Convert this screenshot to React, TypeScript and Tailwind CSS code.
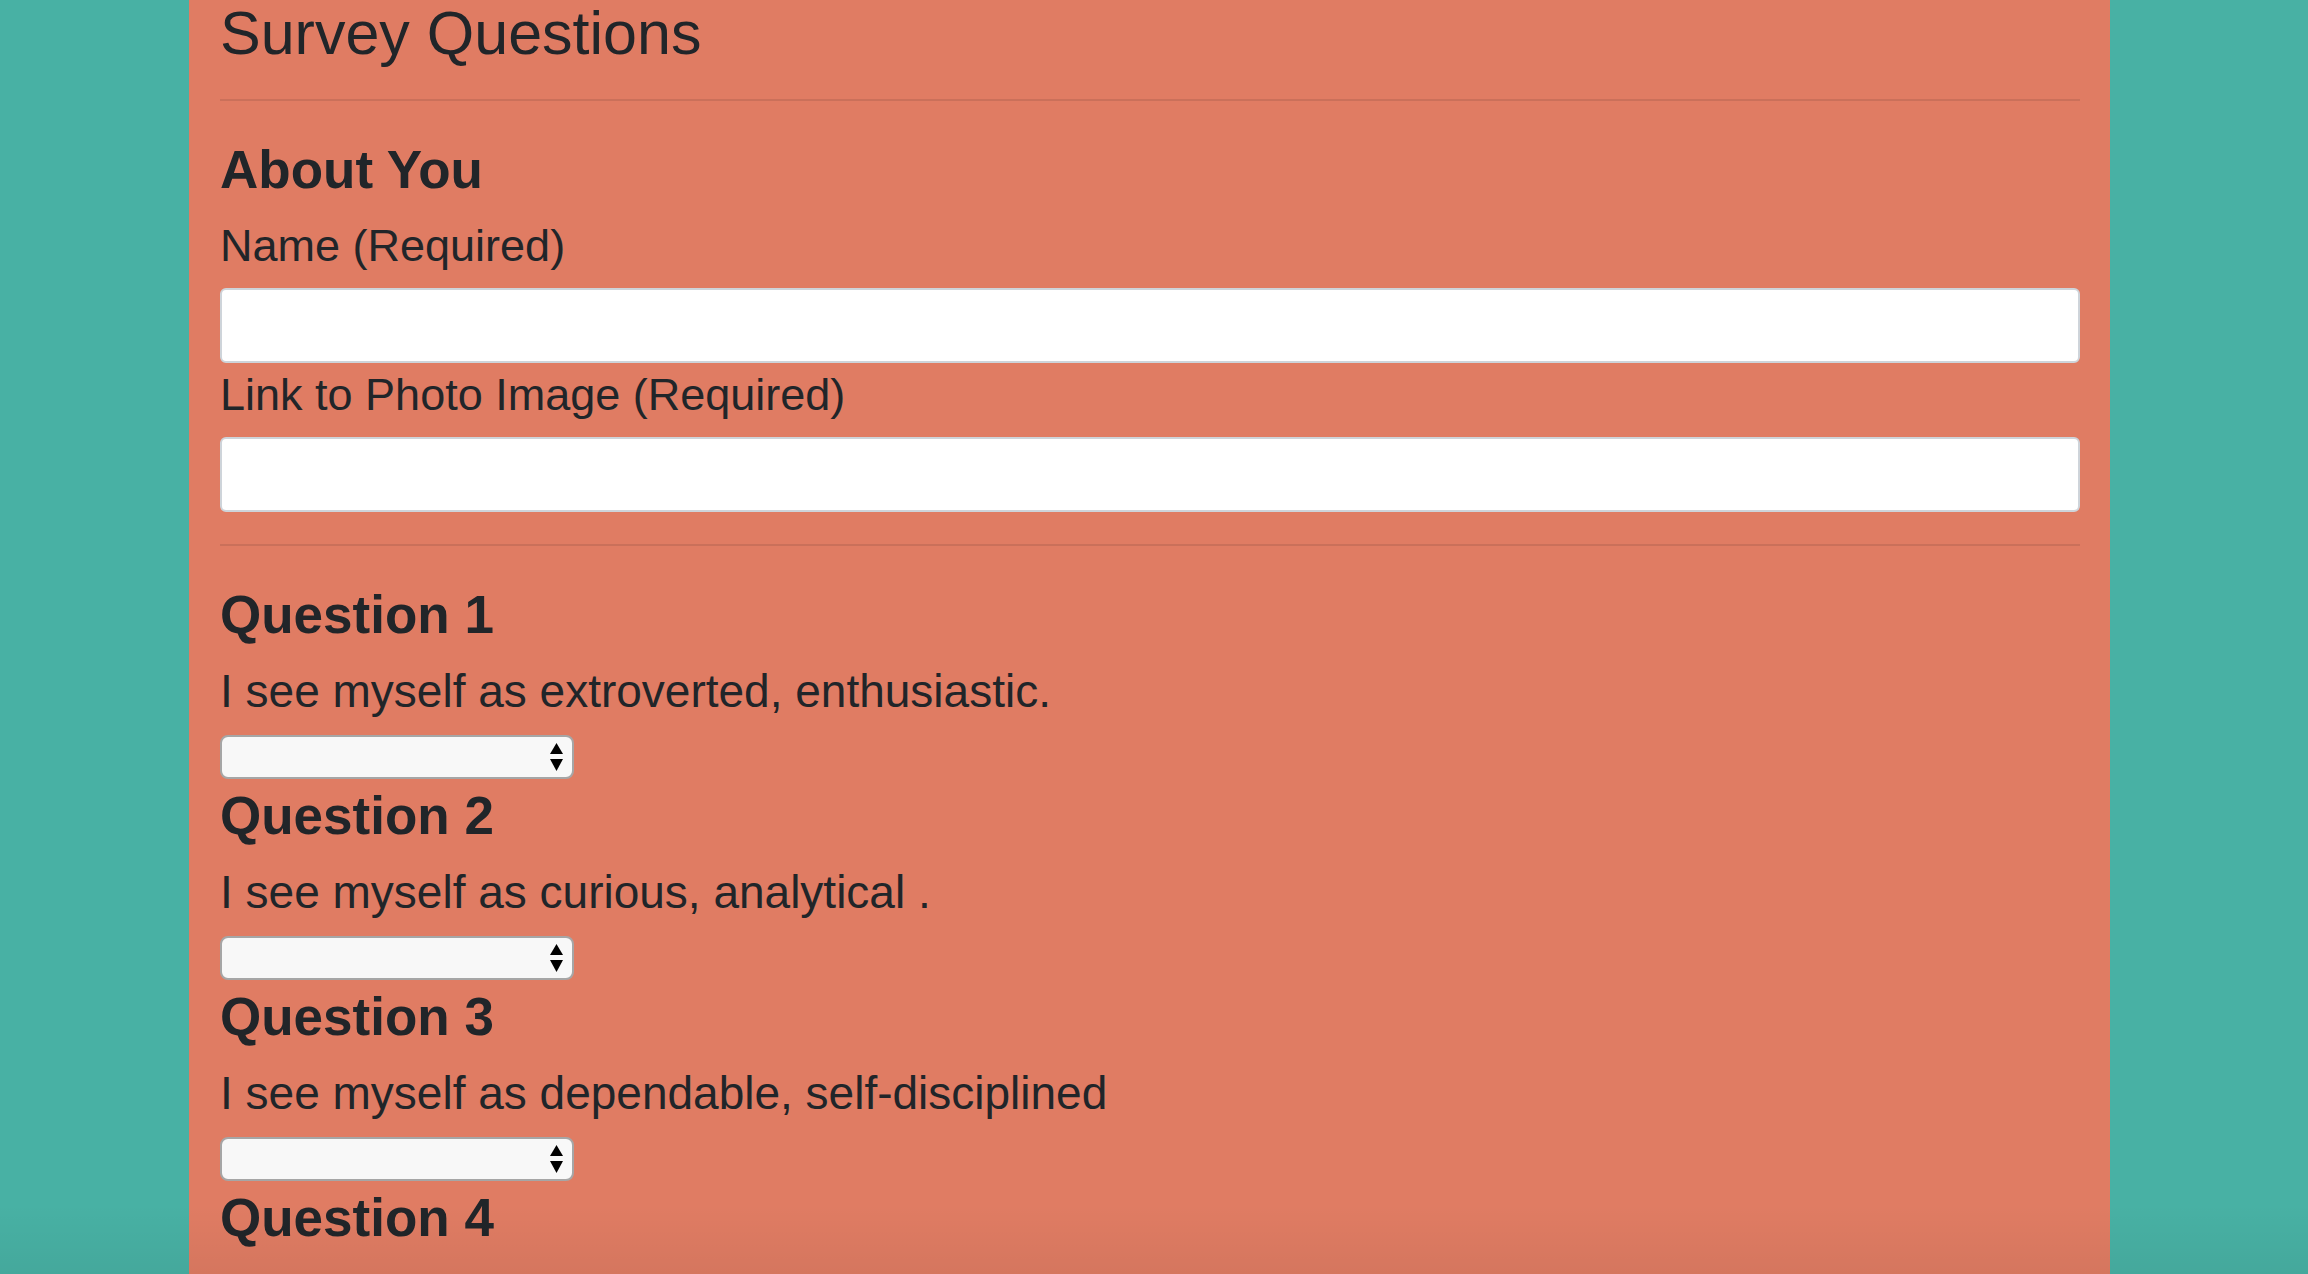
import type { JSX } from "react";

const questions = [
  { title: "Question 1", text: "I see myself as extroverted, enthusiastic." },
  { title: "Question 2", text: "I see myself as curious, analytical ." },
  { title: "Question 3", text: "I see myself as dependable, self-disciplined" },
  { title: "Question 4", text: "" },
];

function ArrowsIcon(): JSX.Element {
  return (
    <svg width="13" height="28" viewBox="0 0 13 28" className="pointer-events-none absolute right-[11px] top-[8px]">
      <path d="M6.5 0 L13 11 L0 11 Z" fill="#000" />
      <path d="M0 16 L13 16 L6.5 28 Z" fill="#000" />
    </svg>
  );
}

function QuestionBlock({ title, text }: { title: string; text: string }): JSX.Element {
  return (
    <div>
      <h3 className="text-[53px] font-bold leading-[74px]">{title}</h3>
      {text && (
        <>
          <p className="mt-[8px] text-[46px] leading-[63px]">{text}</p>
          <div className="relative mt-[12px] h-[44px] w-[354px]">
            <select className="h-full w-full appearance-none rounded-[8px] border-2 border-[#a6a6a6] bg-[#f8f8f8] outline-none">
              <option value=""></option>
              <option value="1">1 (Strongly Disagree)</option>
              <option value="2">2</option>
              <option value="3">3</option>
              <option value="4">4</option>
              <option value="5">5 (Strongly Agree)</option>
            </select>
            <ArrowsIcon />
          </div>
        </>
      )}
    </div>
  );
}

export default function App(): JSX.Element {
  return (
    <div className="relative h-[1274px] overflow-hidden bg-[#48b1a4] font-['Liberation_Sans',Arial,sans-serif] text-[#212529]">
      <section className="ml-[189px] min-h-full w-[1921px] bg-[#e07c63] pl-[31px] pr-[30px] pb-10">
        {/* Title */}
        <h1 className="text-[61px] leading-[66px]">Survey Questions</h1>
        <hr className="mt-[33px] h-[2px] border-0 bg-[#ca705a]" />

        {/* About you */}
        <h3 className="mt-[32px] text-[53px] font-bold leading-[74px]">About You</h3>
        <label className="mt-[7px] block text-[45px] leading-[63px]">Name (Required)</label>
        <input
          type="text"
          className="mt-[11px] block h-[75px] w-full rounded-[6px] border-2 border-[#ced4da] bg-white"
        />
        <label className="block text-[45px] leading-[63px]">Link to Photo Image (Required)</label>
        <input
          type="text"
          className="mt-[11px] block h-[75px] w-full rounded-[6px] border-2 border-[#ced4da] bg-white"
        />
        <hr className="mt-[32px] h-[2px] border-0 bg-[#ca705a]" />

        {/* Questions */}
        <div className="mt-[32px]">
          {questions.map((q) => (
            <QuestionBlock key={q.title} title={q.title} text={q.text} />
          ))}
        </div>
      </section>

      <div className="pointer-events-none absolute inset-x-0 bottom-0 h-[70px] bg-linear-to-b from-transparent to-black/[0.05]" />
    </div>
  );
}
